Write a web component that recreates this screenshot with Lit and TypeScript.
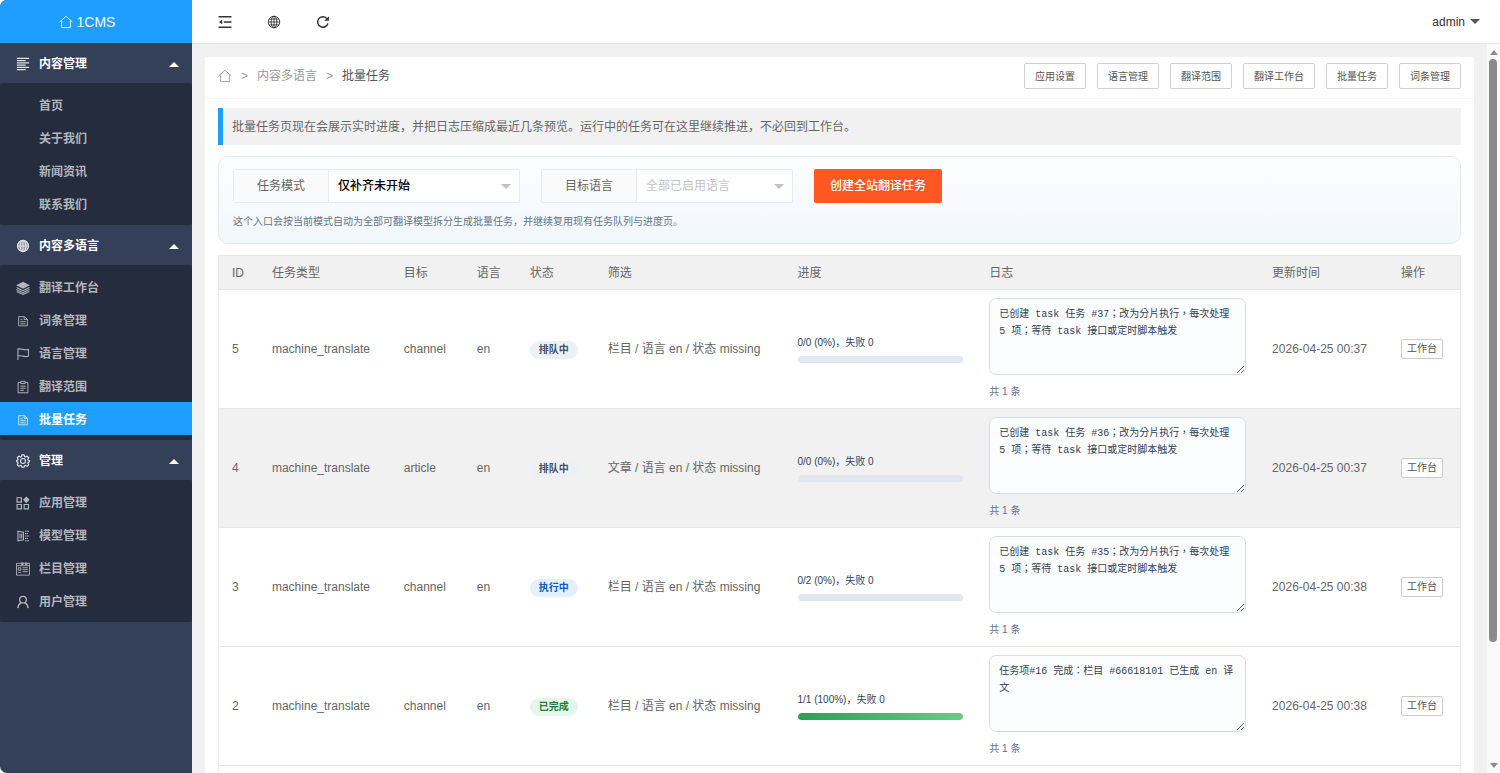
import { LitElement, html, css, svg, TemplateResult } from "lit";
import { customElement, property, state } from "lit/decorators.js";
import { classMap } from "lit/directives/class-map.js";

const ICONS: Record<string, TemplateResult> = {
  home: svg`<path d="M.6 8 8 1.4 15.4 8M3 6.4v8h10v-8" fill="none" stroke="currentColor" stroke-width="1"/>`,
  list: svg`<path d="M1 1.5h14M1 4.1h10M1 6.7h14M1 9.3h10M1 11.9h14M1 14.5h10" fill="none" stroke="currentColor" stroke-width="1.3"/>`,
  globe: svg`<g fill="none" stroke="currentColor" stroke-width="1"><circle cx="8" cy="8" r="6.6"/><ellipse cx="8" cy="8" rx="3.3" ry="6.6"/><path d="M8 1.4v13.2M1.4 8h13.2M2.4 4.7h11.2M2.4 11.3h11.2"/></g>`,
  globeBold: svg`<circle cx="8" cy="8" r="6.8" fill="currentColor" fill-opacity=".55"/><g fill="none" stroke="currentColor" stroke-width="1.2"><circle cx="8" cy="8" r="6.4"/><ellipse cx="8" cy="8" rx="3.2" ry="6.4"/><path d="M8 1.6v12.8M1.6 8h12.8"/></g>`,
  layers: svg`<path d="M8 .8 15.8 4.8 8 8.800.2 4.800z" fill="currentColor"/><path d="M.6 7.400 8 11l7.400-3.600M.6 9.800 8 13.400l7.400-3.600M.8 12 8 15.400l7.200-3.400" fill="none" stroke="currentColor" stroke-width="1.200"/>`,
  file: svg`<g fill="none" stroke="currentColor" stroke-width="1"><path d="M3 3h6.500L13 6v7.500H3z"/><path d="M9.300 3v3.200H13M5 6.500h2.500M5 8.800h6M5 11.200h6"/></g>`,
  flag: svg`<path d="M2.200 1.400v13.400M2.200 2.400c4-1.300 6 2 12 .4v7.800c-6 1.600-8-1.700-12-.4" fill="none" stroke="currentColor" stroke-width="1.200"/>`,
  clip: svg`<g fill="none" stroke="currentColor" stroke-width="1.100"><path d="M5.600 2.800H2.400v11.800h11.200V2.800h-3.200"/><path d="M5.600 1.500h4.800v2.600H5.600zM5 7h6M5 9.400h6M5 11.800h4"/></g>`,
  gear: svg`<g fill="none" stroke="currentColor" stroke-width="1.300" stroke-linejoin="round"><path d="M6.700 1h2.600l.5 2 1.100.5 1.800-1.100 1.900 1.900-1.100 1.800.5 1.100 2 .5v.6l-2 1-.5 1.100 1.100 1.800-1.900 1.900-1.800-1.100-1.100.5-.5 1.500H6.700l-.5-1.500-1.100-.5-1.800 1.100-1.900-1.900 1.100-1.800-.5-1.100-2-1v-.6l2-.5.5-1.100-1.100-1.800 1.900-1.900 1.800 1.100 1.100-.5z"/><circle cx="8" cy="8" r="2.800"/></g>`,
  apps: svg`<g fill="none" stroke="currentColor" stroke-width="1.300"><path d="M1.200 2h5v5h-5zM1.200 9.700h5v5h-5zM9.300 9.700h5v5h-5z"/></g><path d="M11.800.6 15.600 4.400 11.800 8.200 8 4.400z" fill="currentColor"/>`,
  model: svg`<g fill="none" stroke="currentColor" stroke-width="1.200"><path d="M2.200 1.800v12.400M2.200 2.500l6.300 1.200v8.600l-6.300 1.200M4.600 5.200v5.600M6.600 5.200v5.600"/><path d="M10.200 2.500h4.600M10.200 5.200h3.600M10.200 8h4.600M10.200 10.800h3.600M10.200 13.500h4.600" stroke-dasharray="2 .6"/></g>`,
  column: svg`<g fill="none" stroke="currentColor" stroke-width="1"><path d="M.6 1.500h14.800v13.500H.6zM.6 4.200h14.800M2.600 6.500h3v3h-3zM7.500 6.500h6M7.500 8.700h6M7.500 11h6M2.600 12h3"/></g><path d="M6 .6h2.400v3.200H6zM10.500.6h2.400v3.200h-2.400z" fill="currentColor"/>`,
  user: svg`<g fill="none" stroke="currentColor" stroke-width="1.500"><circle cx="8" cy="5.300" r="3.800"/><path d="M2.200 15c.1-3 1.500-5 3.800-6.200M13.800 15c-.1-3-1.500-5-3.800-6.200"/></g>`,
  fold: svg`<path d="M.6 2h14.800M6.600 8h8.800M.6 14h14.800" fill="none" stroke="currentColor" stroke-width="1.500"/><path d="M1 8l3.800-2.600v5.200z" fill="currentColor"/>`,
  refresh: svg`<path d="M13.700 9.500A6 6 0 1 1 12.300 3.900" fill="none" stroke="currentColor" stroke-width="1.600"/><path d="M14.800 1.300v5.400H9.400z" fill="currentColor"/>`,
};

const icon = (name: string) =>
  html`<svg class="icon" viewBox="0 0 16 16" aria-hidden="true">${ICONS[name]}</svg>`;

const SANS = css`"Liberation Sans", "Noto Sans CJK SC", sans-serif`;

const shared = css`
  * { box-sizing: border-box; }
  .icon { display: block; width: 14px; height: 14px; flex: none; }
  a { color: inherit; text-decoration: none; }
  button { font: inherit; cursor: pointer; }
`;

interface MenuItem { label: string; icon?: string; active?: boolean; }
interface MenuGroup { label: string; icon: string; items: MenuItem[]; }

const MENU: MenuGroup[] = [
  {
    label: "内容管理", icon: "list",
    items: [{ label: "首页" }, { label: "关于我们" }, { label: "新闻资讯" }, { label: "联系我们" }],
  },
  {
    label: "内容多语言", icon: "globeBold",
    items: [
      { label: "翻译工作台", icon: "layers" },
      { label: "词条管理", icon: "file" },
      { label: "语言管理", icon: "flag" },
      { label: "翻译范围", icon: "clip" },
      { label: "批量任务", icon: "file", active: true },
    ],
  },
  {
    label: "管理", icon: "gear",
    items: [
      { label: "应用管理", icon: "apps" },
      { label: "模型管理", icon: "model" },
      { label: "栏目管理", icon: "column" },
      { label: "用户管理", icon: "user" },
    ],
  },
];

type Status = "queued" | "running" | "done";
interface Task {
  id: number; target: string; status: Status; filter: string;
  done: number; total: number; log: string; updated: string;
}

const STATUS_LABEL: Record<Status, string> = { queued: "排队中", running: "执行中", done: "已完成" };

const created = (n: number) =>
  `已创建 task 任务 #${n}；改为分片执行，每次处理 5 项；等待 task 接口或定时脚本触发`;

const TASKS: Task[] = [
  { id: 5, target: "channel", status: "queued", filter: "栏目 / 语言 en / 状态 missing", done: 0, total: 0, log: created(37), updated: "2026-04-25 00:37" },
  { id: 4, target: "article", status: "queued", filter: "文章 / 语言 en / 状态 missing", done: 0, total: 0, log: created(36), updated: "2026-04-25 00:37" },
  { id: 3, target: "channel", status: "running", filter: "栏目 / 语言 en / 状态 missing", done: 0, total: 2, log: created(35), updated: "2026-04-25 00:38" },
  { id: 2, target: "channel", status: "done", filter: "栏目 / 语言 en / 状态 missing", done: 1, total: 1, log: "任务项#16 完成：栏目 #66618101 已生成 en 译文", updated: "2026-04-25 00:38" },
];

const COLUMNS = [
  { label: "ID", width: 40 },
  { label: "任务类型", width: 132 },
  { label: "目标", width: 73 },
  { label: "语言", width: 53 },
  { label: "状态", width: 78 },
  { label: "筛选", width: 190 },
  { label: "进度", width: 192 },
  { label: "日志", width: 283 },
  { label: "更新时间", width: 129 },
  { label: "操作", width: 72 },
];
const TOTAL_WIDTH = COLUMNS.reduce((sum, c) => sum + c.width, 0);

@customElement("side-menu")
export class SideMenu extends LitElement {
  @state() private closed = new Set<string>();

  static styles = [shared, css`
    :host { display: block; background: #344058; color: #fff; font: 12px/20px ${SANS}; overflow: hidden; }
    .logo { display: flex; align-items: center; justify-content: center; gap: 4px; height: 43px; padding-right: 18px; background: #1e9fff; font-size: 14px; color: #f2f9ff; }
    .group { display: flex; align-items: center; width: 100%; height: 40px; padding: 2px 13px 0 16px; border: 0; background: none; color: #fff; font-weight: 700; text-align: left; gap: 9px; }
    .group .icon { opacity: .85; }
    .group span { flex: 1; }
    .caret { border: 5px solid transparent; border-top: 0; border-bottom: 5px solid #fff; }
    .caret.down { border-top: 5px solid #fff; border-bottom: 0; }
    ul { list-style: none; margin: 0; padding: 5px 0; background: #242c3d; border-radius: 2px; }
    li a { display: flex; align-items: center; gap: 9px; height: 33px; padding: 2px 16px 0; color: #b3b6bc; font-weight: 700; }
    li a.plain { padding-left: 39px; }
    li a.active { background: #1e9fff; color: #fff; }
    li a.active .icon { opacity: .8; }
  `];

  private toggle(label: string) {
    const next = new Set(this.closed);
    next.has(label) ? next.delete(label) : next.add(label);
    this.closed = next;
  }

  render() {
    return html`
      <a class="logo" href="#">${icon("home")}<span>1CMS</span></a>
      <nav>
        ${MENU.map((g) => {
          const isClosed = this.closed.has(g.label);
          return html`
            <button class="group" aria-expanded=${!isClosed} @click=${() => this.toggle(g.label)}>
              ${icon(g.icon)}<span>${g.label}</span><i class=${classMap({ caret: true, down: isClosed })}></i>
            </button>
            ${isClosed ? "" : html`<ul>${g.items.map((it) => html`
              <li><a href="#" class=${classMap({ plain: !it.icon, active: !!it.active })}>
                ${it.icon ? icon(it.icon) : ""}<span>${it.label}</span></a></li>`)}</ul>`}`;
        })}
      </nav>`;
  }
}

@customElement("task-table")
export class TaskTable extends LitElement {
  @property({ attribute: false }) tasks: Task[] = [];
  @state() private current = 4;

  static styles = [shared, css`
    :host { display: block; border: 1px solid #e8e8e8; padding-bottom: 40px; }
    table { width: 100%; table-layout: fixed; border-collapse: separate; border-spacing: 0; font: 12px/20px ${SANS}; color: #666; }
    th, td { padding: 0 13px; text-align: left; font-weight: 400; border-bottom: 1px solid #e8e8e8; white-space: nowrap; }
    th { height: 34px; background: #f1f1f1; }
    td { height: 119px; }
    tr.current { background: #f1f1f1; }
    .tag { display: inline-block; padding: 0 9px; border-radius: 9px; font-size: 10px; line-height: 18px; font-weight: 700; vertical-align: middle; }
    .queued { background: #edf1f5; color: #425166; }
    .running { background: #e4f0ff; color: #1059c8; }
    .done { background: #e5f6ea; color: #1d7d3c; }
    .count { font-size: 10px; line-height: 16px; color: #334155; }
    .track { height: 7px; margin: 5px 0 0; border-radius: 4px; background: #e2e8f0; overflow: hidden; }
    .fill { height: 100%; border-radius: 4px; background: linear-gradient(90deg, #2f9e55, #6cc985); }
    textarea { display: block; width: 100%; height: 77px; padding: 7px 9px; border: 1px solid #d3deea; border-radius: 7px; background: #fbfdff; color: #334155; font: 10px/17px "Liberation Mono", "Noto Sans CJK TC", monospace; overflow: hidden; outline: 0; }
    .total { margin-top: 8px; font-size: 10px; line-height: 18px; color: #64748b; }
    .open { height: 20px; padding: 0 5px; border: 1px solid #ccc; border-radius: 2px; background: #fff; color: #555; font-size: 10px; line-height: 18px; vertical-align: middle; }
  `];

  render() {
    return html`
      <table>
        <colgroup>${COLUMNS.map((c) => html`<col style="width:${(c.width / TOTAL_WIDTH) * 100}%">`)}</colgroup>
        <thead><tr>${COLUMNS.map((c) => html`<th scope="col">${c.label}</th>`)}</tr></thead>
        <tbody>${this.tasks.map((t) => {
          const pct = t.total ? Math.round((t.done / t.total) * 100) : 0;
          return html`<tr class=${classMap({ current: t.id === this.current })} @mouseenter=${() => (this.current = t.id)}>
            <td>${t.id}</td>
            <td>machine_translate</td>
            <td>${t.target}</td>
            <td>en</td>
            <td><span class="tag ${t.status}">${STATUS_LABEL[t.status]}</span></td>
            <td>${t.filter}</td>
            <td>
              <div class="count">${t.done}/${t.total} (${pct}%)，失败 0</div>
              <div class="track"><div class="fill" style="width:${pct}%"></div></div>
            </td>
            <td>
              <textarea readonly aria-label="任务 ${t.id} 日志" .value=${t.log}></textarea>
              <div class="total">共 1 条</div>
            </td>
            <td>${t.updated}</td>
            <td><button class="open">工作台</button></td>
          </tr>`;
        })}</tbody>
      </table>`;
  }
}

@customElement("app-root")
export class AppRoot extends LitElement {
  static styles = [shared, css`
    :host { display: grid; grid-template-columns: 192px minmax(0, 1fr); height: 100vh; overflow: hidden; border-radius: 7px; background: #f1f1f1; font: 12px/20px ${SANS}; color: #666; }
    .page { display: flex; flex-direction: column; min-height: 0; }
    header { display: flex; align-items: center; height: 44px; flex: none; padding: 0 20px 0 26px; background: #fff; border-bottom: 1px solid #e9e9e9; color: #333; }
    .tools { display: flex; gap: 35px; flex: 1; }
    .tools button, .account { display: flex; align-items: center; padding: 0; border: 0; background: none; color: #333; }
    .account { gap: 5px; }
    .caret { border: 5px solid transparent; border-bottom: 0; border-top-color: #555; }
    .body { display: flex; flex: 1; min-height: 0; }
    main { flex: 1; min-width: 0; padding: 13px 13px 0; overflow: hidden; }
    .card { min-height: 100%; background: #fff; border-radius: 2px 2px 0 0; }
    .head { display: flex; align-items: center; justify-content: space-between; height: 42px; padding: 0 13px 3px; border-bottom: 1px solid #f6f6f6; }
    .crumbs { display: flex; align-items: center; gap: 9px; color: #999; }
    .crumbs strong { font-weight: 400; color: #555; }
    .links { display: flex; gap: 11px; }
    .links a { height: 26px; padding: 0 10px; border: 1px solid #d0d0d0; border-radius: 2px; background: #fff; color: #555; font-size: 10px; line-height: 25px; }
    .content { display: flex; flex-direction: column; gap: 11px; padding: 9px 13px 13px; }
    .notice { margin: 0; padding: 9px 9px 7px; line-height: 21px; border-left: 5px solid #1e9fff; border-radius: 0 2px 2px 0; background: #f1f1f1; }
    .panel { padding: 12px 14px 10px; border: 1px solid #dfeaf6; border-radius: 10px; background: linear-gradient(#fcfdff, #f2f7fc); }
    form { display: flex; align-items: center; gap: 21px; }
    .field { display: flex; height: 34px; border: 1px solid #eaeaea; border-radius: 2px; background: #fff; }
    .field label { width: 95px; border-right: 1px solid #eaeaea; background: #fafafa; text-align: center; line-height: 32px; }
    .pick { display: flex; align-items: center; position: relative; }
    .pick i { position: absolute; right: 8px; pointer-events: none; border-top-color: #c2c2c2; }
    select { appearance: none; width: 190px; height: 32px; padding: 0 9px; border: 0; outline: 0; background: none; color: #000; font: inherit; font-weight: 500; }
    select.narrow { width: 155px; color: #c4c4c4; font-weight: 400; }
    .create { height: 34px; padding: 0 16px; border: 0; border-radius: 2px; background: #ff5722; color: #fff; font-weight: 500; }
    .hint { margin: 8px 0 0; font-size: 10px; line-height: 22px; color: #64748b; }
    .bar { display: flex; flex-direction: column; align-items: center; justify-content: space-between; width: 13px; padding: 6px 0 5px; background: #fafafa; gap: 4px; }
    .thumb { flex: 1; width: 100%; padding: 0 3px 117px 2px; }
    .thumb div { height: 100%; border-radius: 4px; background: #8b8b8b; }
    .up, .down { border: 4px solid transparent; }
    .up { border-top: 0; border-bottom: 5px solid #8b8b8b; }
    .down { border-bottom: 0; border-top: 5px solid #8b8b8b; }
  `];

  render() {
    return html`
      <side-menu></side-menu>
      <div class="page">
        <header>
          <div class="tools">
            <button aria-label="收起菜单">${icon("fold")}</button>
            <button aria-label="访问网站">${icon("globe")}</button>
            <button aria-label="刷新">${icon("refresh")}</button>
          </div>
          <button class="account">admin<i class="caret"></i></button>
        </header>
        <div class="body">
          <main>
            <div class="card">
              <div class="head">
                <nav class="crumbs" aria-label="面包屑">
                  <a href="#" aria-label="首页">${icon("home")}</a><span>&gt;</span>
                  <a href="#">内容多语言</a><span>&gt;</span><strong>批量任务</strong>
                </nav>
                <div class="links">
                  ${["应用设置", "语言管理", "翻译范围", "翻译工作台", "批量任务", "词条管理"].map((l) => html`<a href="#">${l}</a>`)}
                </div>
              </div>
              <div class="content">
                <p class="notice">批量任务页现在会展示实时进度，并把日志压缩成最近几条预览。运行中的任务可在这里继续推进，不必回到工作台。</p>
                <section class="panel">
                  <form @submit=${(e: Event) => e.preventDefault()}>
                    <div class="field">
                      <label for="mode">任务模式</label>
                      <div class="pick"><select id="mode"><option>仅补齐未开始</option></select><i class="caret"></i></div>
                    </div>
                    <div class="field">
                      <label for="lang">目标语言</label>
                      <div class="pick"><select id="lang" class="narrow"><option>全部已启用语言</option></select><i class="caret"></i></div>
                    </div>
                    <button class="create">创建全站翻译任务</button>
                  </form>
                  <p class="hint">这个入口会按当前模式自动为全部可翻译模型拆分生成批量任务，并继续复用现有任务队列与进度页。</p>
                </section>
                <task-table .tasks=${TASKS}></task-table>
              </div>
            </div>
          </main>
          <div class="bar" aria-hidden="true"><i class="up"></i><div class="thumb"><div></div></div><i class="down"></i></div>
        </div>
      </div>`;
  }
}
